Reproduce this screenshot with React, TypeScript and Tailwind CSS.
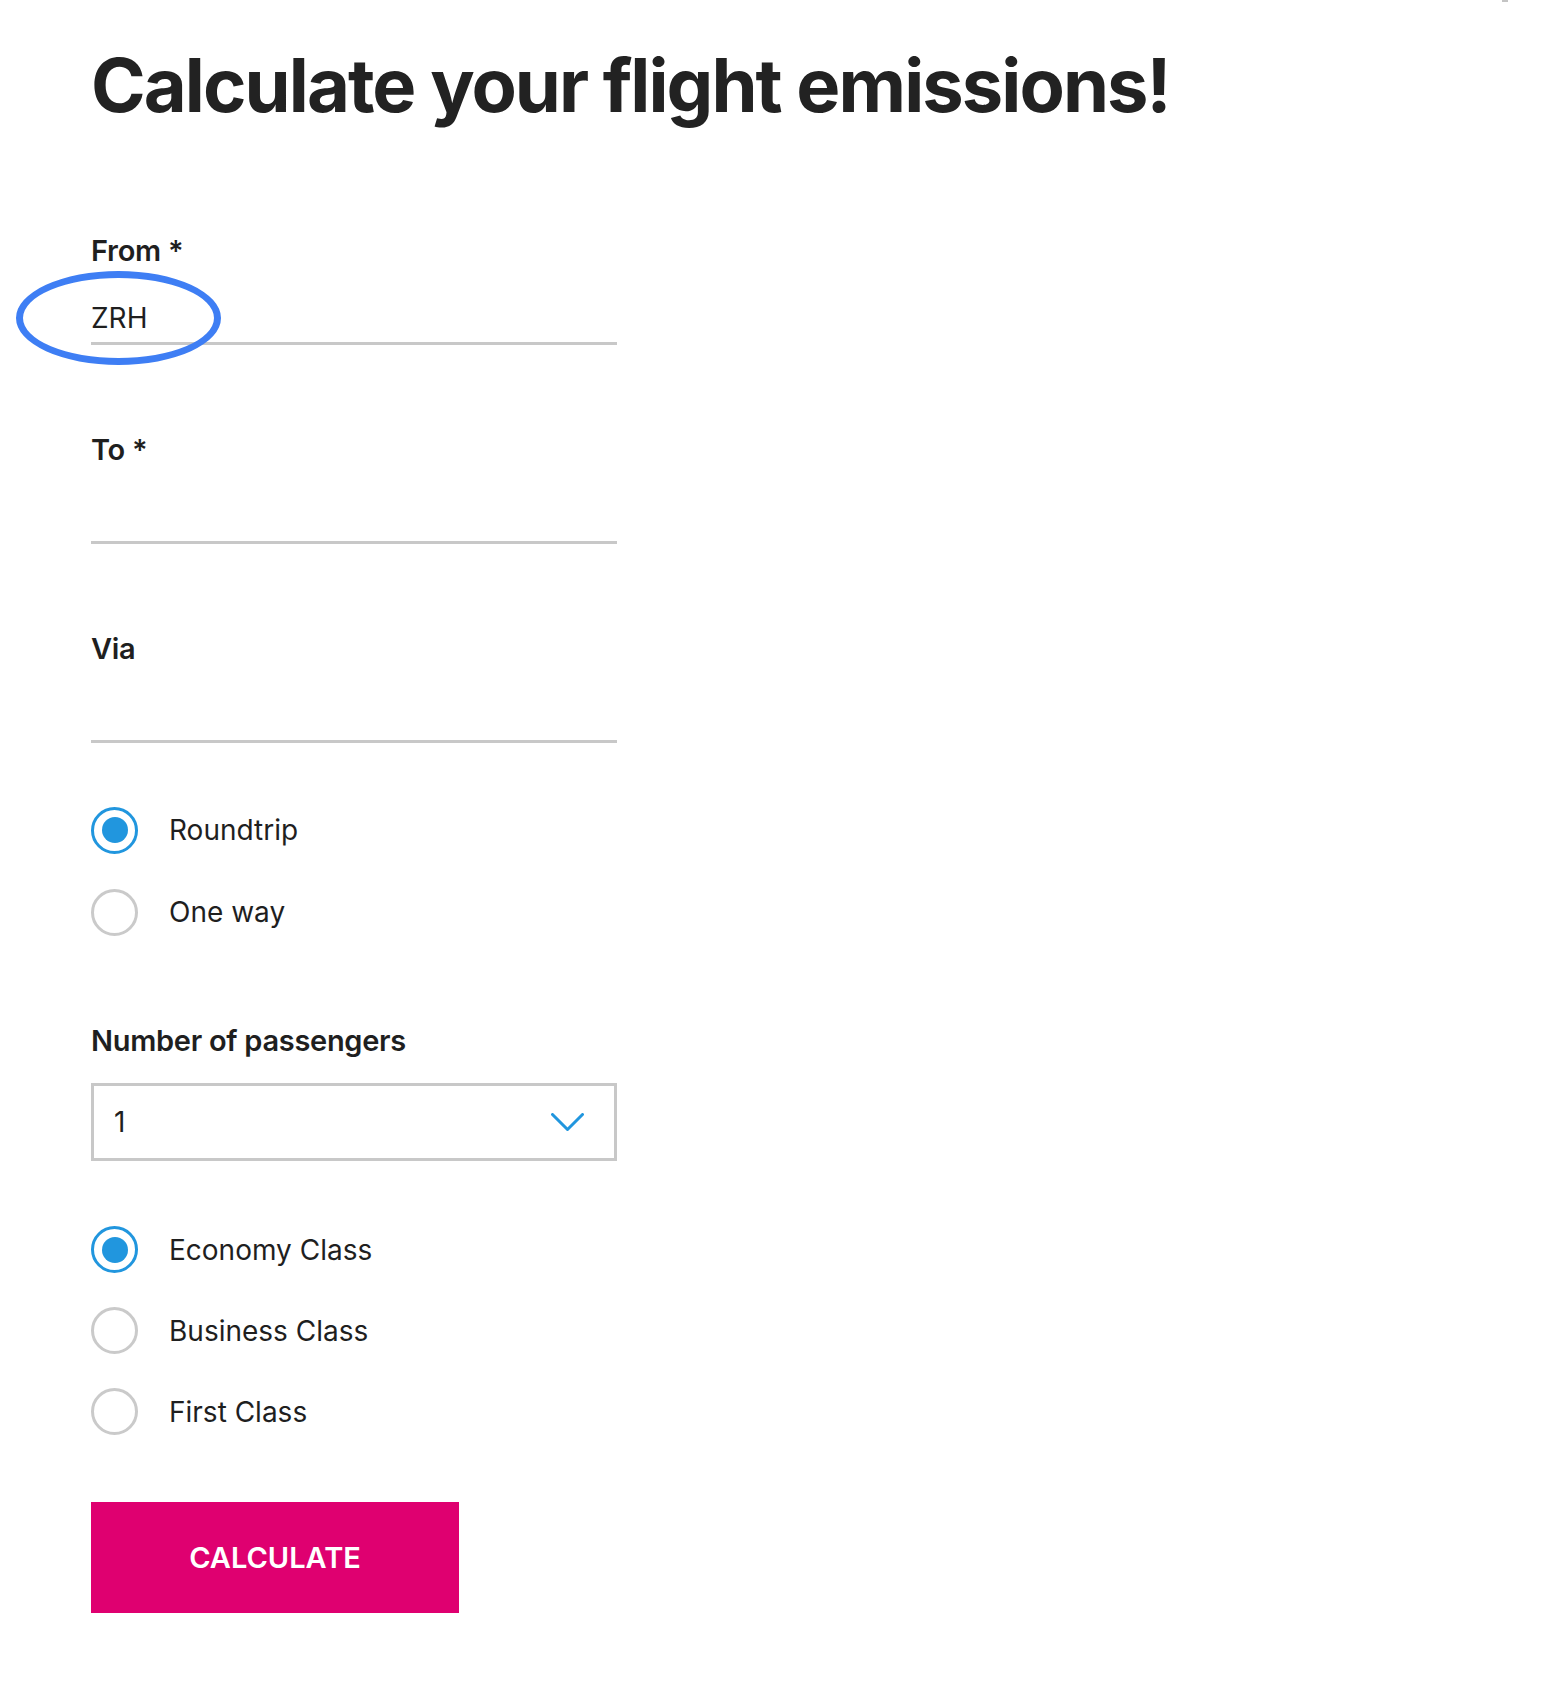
import { useState } from 'react'

const FONT = { fontFamily: 'Inter, "Noto Sans", Arial, sans-serif' }

function TextField({ label, value }: { label: string; value?: string }) {
    return (
        <div className="w-[526px]">
            <label className="block text-[29px] font-semibold leading-[36px] tracking-[-0.01em] text-[#1f1f1f]">
                {label}
            </label>
            <div className="mt-[31px] border-b-[3px] border-[#c8c8c8] pb-[6px]">
                <input
                    readOnly
                    value={value ?? ''}
                    className="block h-[36px] w-full bg-transparent text-[28px] leading-[36px] text-[#1f1f1f] outline-none"
                    style={FONT}
                />
            </div>
        </div>
    )
}

function Radio({
    label,
    checked,
    onSelect,
    rowClass,
}: {
    label: string
    checked: boolean
    onSelect: () => void
    rowClass: string
}) {
    return (
        <button type="button" onClick={onSelect} className={`flex items-center ${rowClass}`}>
            <span
                className={`flex h-[47px] w-[47px] items-center justify-center rounded-full border-[3px] ${
                    checked ? 'border-[#2196de]' : 'border-[#cacaca]'
                }`}
            >
                {checked && <span className="h-[26px] w-[26px] rounded-full bg-[#2196de]" />}
            </span>
            <span className="ml-[31px] text-[28px] leading-[36px] text-[#1f1f1f]">{label}</span>
        </button>
    )
}

export default function App() {
    const [trip, setTrip] = useState('roundtrip')
    const [cabin, setCabin] = useState('economy')

    return (
        <div className="relative min-h-[1694px] bg-white" style={FONT}>
            {/* scrollbar remnant top right */}
            <div className="absolute left-[1502px] top-0 h-[2px] w-[6px] bg-[#c4c4c4]" />

            <main className="pl-[91px] pt-[48px]">
                <h1 className="text-[74px] font-bold leading-[74px] tracking-[-0.026em] text-[#222]">
                    Calculate your flight emissions!
                </h1>

                <form className="mt-[111px]" onSubmit={(event) => event.preventDefault()}>
                    <div className="relative">
                        <TextField label="From *" value="ZRH" />
                        {/* annotation ring */}
                        <div className="pointer-events-none absolute left-[-75px] top-[38px] h-[94px] w-[205px] rounded-[50%] border-[7px] border-[#3e7ef4]" />
                    </div>
                    <div className="mt-[87px]">
                        <TextField label="To *" />
                    </div>
                    <div className="mt-[87px]">
                        <TextField label="Via" />
                    </div>

                    <div className="mt-[46px] flex flex-col items-start">
                        <Radio
                            label="Roundtrip"
                            checked={trip === 'roundtrip'}
                            onSelect={() => setTrip('roundtrip')}
                            rowClass="h-[82px]"
                        />
                        <Radio
                            label="One way"
                            checked={trip === 'oneway'}
                            onSelect={() => setTrip('oneway')}
                            rowClass="h-[82px]"
                        />
                    </div>

                    <div className="mt-[70px] w-[526px]">
                        <label className="block text-[29px] font-semibold leading-[36px] tracking-[-0.01em] text-[#1f1f1f]">
                            Number of passengers
                        </label>
                        <div className="mt-[24px] flex h-[78px] items-center justify-between border-[3px] border-[#c8c8c8] pl-[20px] pr-[30px]">
                            <span className="text-[28px] leading-[36px] text-[#1f1f1f]">1</span>
                            <svg width="33" height="19" viewBox="0 0 33 19" fill="none">
                                <path
                                    d="M1.5 1.5 L16.5 16.5 L31.5 1.5"
                                    stroke="#2196de"
                                    strokeWidth="3"
                                    strokeLinecap="round"
                                    strokeLinejoin="round"
                                />
                            </svg>
                        </div>
                    </div>

                    <div className="mt-[48px] flex flex-col items-start">
                        <Radio
                            label="Economy Class"
                            checked={cabin === 'economy'}
                            onSelect={() => setCabin('economy')}
                            rowClass="h-[81px]"
                        />
                        <Radio
                            label="Business Class"
                            checked={cabin === 'business'}
                            onSelect={() => setCabin('business')}
                            rowClass="h-[81px]"
                        />
                        <Radio
                            label="First Class"
                            checked={cabin === 'first'}
                            onSelect={() => setCabin('first')}
                            rowClass="h-[81px]"
                        />
                    </div>

                    <button
                        type="submit"
                        className="mt-[50px] flex h-[111px] w-[368px] items-center justify-center bg-[#df0070] text-[29px] font-semibold text-white"
                    >
                        CALCULATE
                    </button>
                </form>
            </main>
        </div>
    )
}
